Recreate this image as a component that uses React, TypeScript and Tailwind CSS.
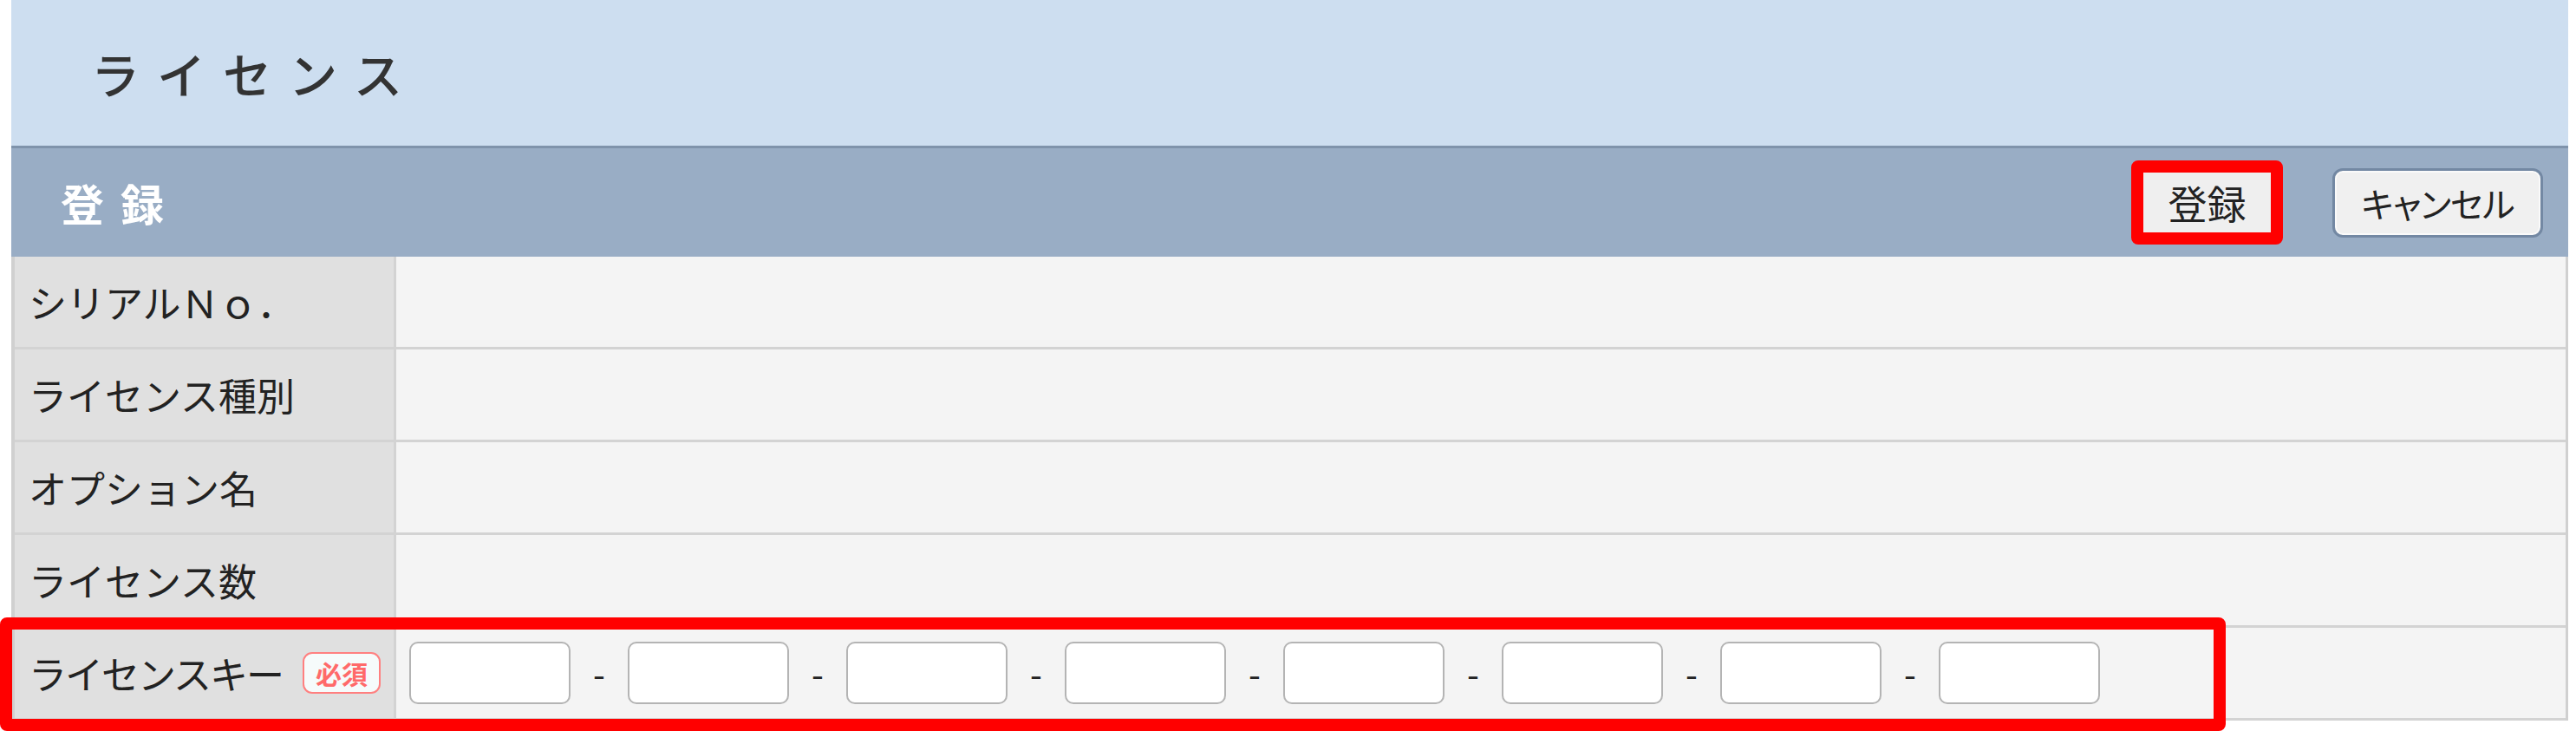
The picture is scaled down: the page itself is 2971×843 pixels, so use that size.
const FONT = "font-['Noto_Sans_CJK_JP','Noto_Sans',sans-serif]"

const rows = ['シリアルＮｏ．', 'ライセンス種別', 'オプション名', 'ライセンス数']

function KeyInputs() {
  const parts = Array.from({ length: 8 }, (_, i) => i)
  return (
    <div className="flex items-center pl-[15px]">
      {parts.map((i) => (
        <div key={i} className="flex items-center">
          {i > 0 && (
            <span className="w-[66px] text-center text-[40px] leading-none text-[#222]">-</span>
          )}
          <input
            type="text"
            className="w-[186px] h-[72px] rounded-[10px] border-2 border-[#b4b4b4] bg-white outline-none"
          />
        </div>
      ))}
    </div>
  )
}

export default function App() {
  return (
    <div className={`relative w-[2971px] h-[843px] overflow-hidden bg-white ${FONT}`}>
      <div className="ml-[13px] w-[2949px]">
        {/* page title */}
        <div className="h-[168px] bg-[#cddef0] flex items-center pl-[92px]">
          <h1 className="text-[56px] tracking-[20px] text-[#333] font-medium">ライセンス</h1>
        </div>

        {/* section bar */}
        <div className="h-[128px] border-t-[3px] border-[#7f93ab] bg-[#99adc5] flex items-center justify-between pl-[57px] pr-[29px]">
          <span className="text-[50px] font-bold tracking-[19px] text-white">登録</span>
          <div className="flex items-center gap-[57px]">
            <button className="w-[175px] h-[97px] rounded-[8px] border-[14px] border-[#ff0000] bg-[#efefef] text-[45px] text-[#222] flex items-center justify-center">
              登録
            </button>
            <button className="w-[243px] h-[80px] rounded-[12px] border-[3px] border-[#7388a3] bg-[#f0f0f0] shadow-[inset_0_0_0_2px_#fafafa] text-[40px] tracking-[-1px] text-[#222] flex items-center justify-center [font-feature-settings:'palt']">
              キャンセル
            </button>
          </div>
        </div>

        {/* form table */}
        <div className="border-l-4 border-r-[3px] border-[#d0d0d0] text-[44px] text-[#222]">
          {rows.map((label) => (
            <div key={label} className="flex h-[107px] border-b-[3px] border-[#d3d3d3]">
              <div className="w-[440px] bg-[#e0e0e0] border-r-[3px] border-[#d3d3d3] flex items-center pl-[16px]">
                {label}
              </div>
              <div className="flex-1 bg-[#f4f4f4]" />
            </div>
          ))}
          <div className="flex h-[107px] border-b-[3px] border-[#d3d3d3]">
            <div className="w-[440px] bg-[#e0e0e0] border-r-[3px] border-[#d3d3d3] flex items-center justify-between pl-[16px] pr-[15px]">
              <span className="tracking-[-2px]">ライセンスキー</span>
              <span className="w-[90px] h-[48px] rounded-[11px] border-2 border-[#ff8080] bg-[#f6fbfb] text-[30px] font-bold leading-none text-[#ff6a6a] flex items-center justify-center">
                必須
              </span>
            </div>
            <div className="flex-1 bg-[#f4f4f4] flex items-center">
              <KeyInputs />
            </div>
          </div>
        </div>
      </div>

      {/* red annotation around the key row */}
      <div className="absolute left-0 top-[712px] w-[2567px] h-[131px] rounded-[8px] border-[14px] border-[#ff0000]" />
    </div>
  )
}
